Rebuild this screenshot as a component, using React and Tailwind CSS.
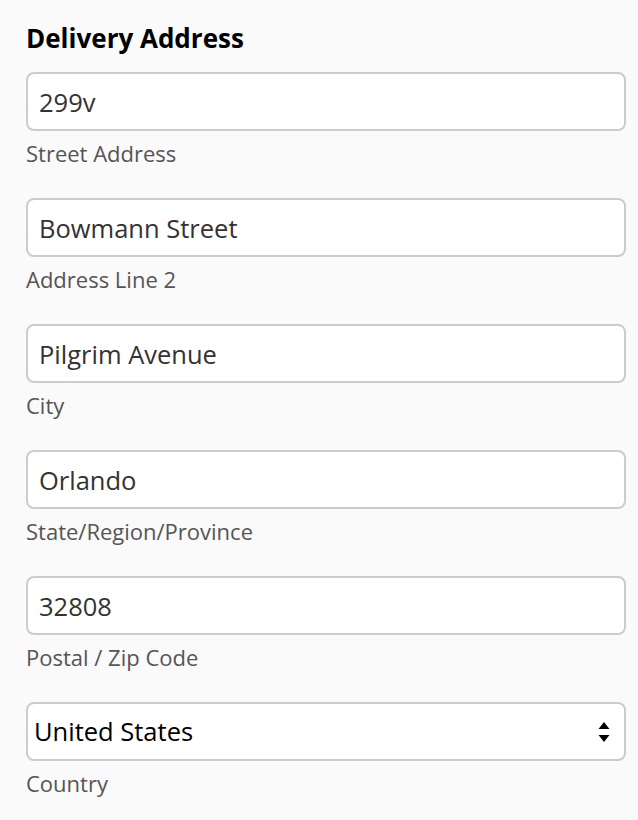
import { useState } from 'react';

const fields = [
  { value: '299v', label: 'Street Address' },
  { value: 'Bowmann Street', label: 'Address Line 2' },
  { value: 'Pilgrim Avenue', label: 'City' },
  { value: 'Orlando', label: 'State/Region/Province' },
  { value: '32808', label: 'Postal / Zip Code' },
];

const Field = ({ initial, label }) => {
  const [value, setValue] = useState(initial);
  return (
    <div className="mb-[31px]">
      <input
        type="text"
        value={value}
        onChange={(e) => setValue(e.target.value)}
        className="block w-[600px] h-[59px] px-[11px] bg-white border-2 border-[#cccccc] rounded-[8px] text-[25.5px] text-[#333333] outline-none"
      />
      <p className="mt-[8px] h-[28px] leading-[28px] text-[22px] text-[#555555]">{label}</p>
    </div>
  );
};

export default function App() {
  const [country, setCountry] = useState('United States');

  return (
    <div
      className="min-h-[820px] bg-[#fafafa] pl-[26px] pt-[22px]"
      style={{ fontFamily: '"Open Sans", "Noto Sans", sans-serif' }}
    >
      <h2 className="h-[32px] leading-[32px] text-[26px] font-bold text-black mb-[18px]">Delivery Address</h2>

      {fields.map((f) => (
        <Field key={f.label} initial={f.value} label={f.label} />
      ))}

      <div>
        <div className="relative w-[600px]">
          <select
            value={country}
            onChange={(e) => setCountry(e.target.value)}
            className="block w-full h-[59px] pl-[6px] pr-[40px] appearance-none bg-white border-2 border-[#cccccc] rounded-[8px] text-[25.5px] text-black outline-none"
          >
            <option>United States</option>
            <option>Canada</option>
            <option>Mexico</option>
          </select>
          <svg
            className="absolute right-[16px] top-[19px] pointer-events-none"
            width="12"
            height="22"
            viewBox="0 0 12 22"
          >
            <path d="M6 1 L11.5 8 L0.5 8 Z" fill="#000" />
            <path d="M0.5 14 L11.5 14 L6 21 Z" fill="#000" />
          </svg>
        </div>
        <p className="mt-[8px] h-[28px] leading-[28px] text-[22px] text-[#555555]">Country</p>
      </div>
    </div>
  );
}
